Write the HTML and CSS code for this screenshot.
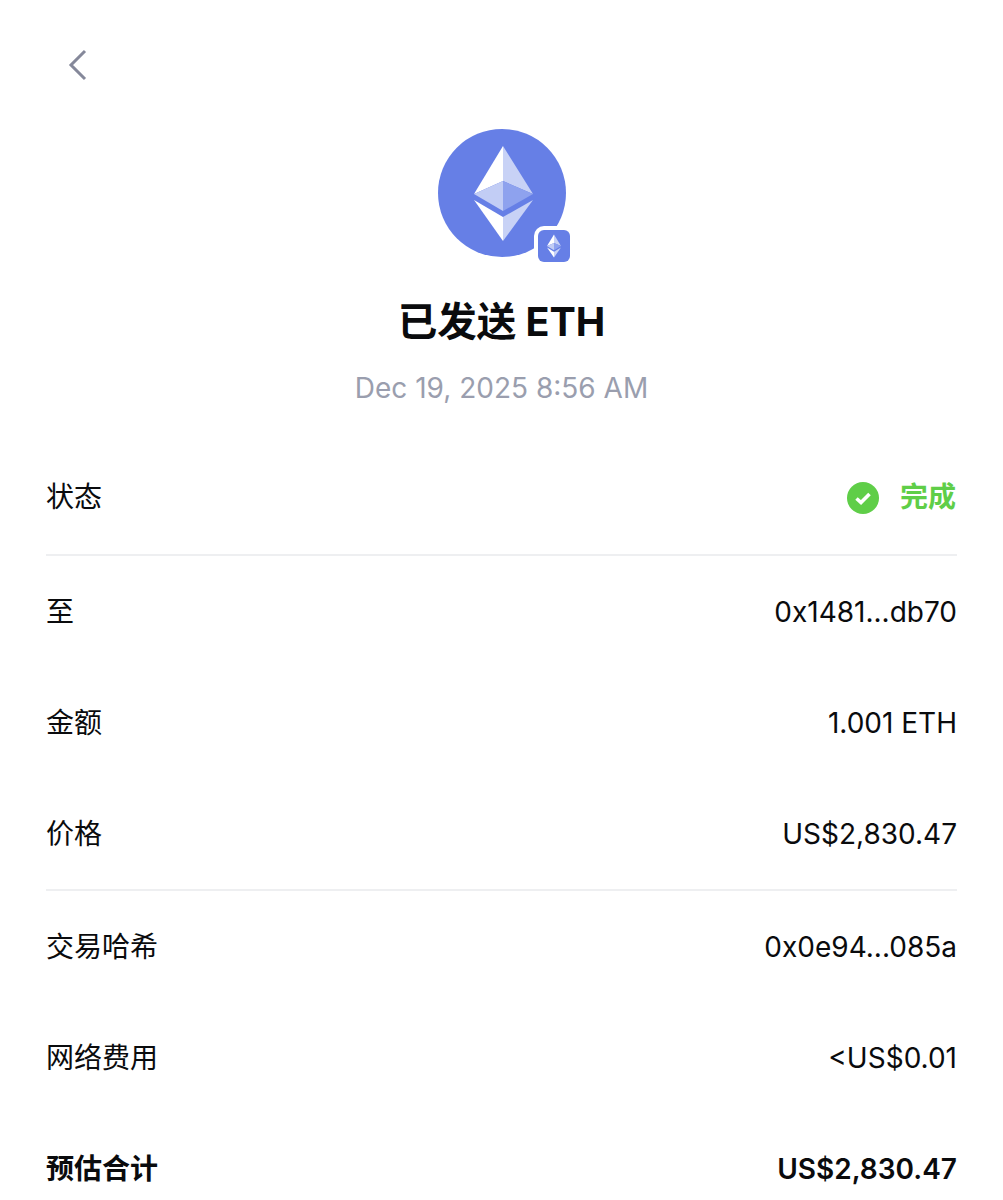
FILE: index.html
```html
<!DOCTYPE html>
<html lang="zh-CN">
  <head>
    <meta charset="UTF-8" />
    <meta name="viewport" content="width=device-width, initial-scale=1.0" />
    <title>已发送 ETH</title>
    <link rel="stylesheet" href="styles.css">
  </head>
  <body>
    <header class="top-bar">
      <button class="back-button" aria-label="返回">
        <svg width="20" height="32" viewBox="0 0 20 32">
          <path d="M17 2 L3 16 L17 30" fill="none" stroke="#85889a" stroke-width="3"/>
        </svg>
      </button>
    </header>

    <div class="token">
      <svg class="token-icon" width="128" height="128" viewBox="0 0 128 128">
        <circle cx="64" cy="64" r="64" fill="#667fe6"/>
        <path d="M65 17 L65 52 L36 65 Z" fill="#fff"/>
        <path d="M65 17 L65 52 L95 65 Z" fill="#c8d2f6"/>
        <path d="M36 65 L65 52 L65 82 Z" fill="#c2cdf5"/>
        <path d="M95 65 L65 52 L65 82 Z" fill="#8ea2ee"/>
        <path d="M36 71 L65 88 L65 112 Z" fill="#fff"/>
        <path d="M95 71 L65 88 L65 112 Z" fill="#c8d2f6"/>
      </svg>
      <span class="token-badge">
        <svg width="14" height="24" viewBox="0 0 58 95">
          <path d="M29 0 L29 35 L0 48 Z" fill="#fff"/>
          <path d="M29 0 L29 35 L58 48 Z" fill="#c8d2f6"/>
          <path d="M0 48 L29 35 L29 65 Z" fill="#c2cdf5"/>
          <path d="M58 48 L29 35 L29 65 Z" fill="#8ea2ee"/>
          <path d="M0 54 L29 71 L29 95 Z" fill="#fff"/>
          <path d="M58 54 L29 71 L29 95 Z" fill="#c8d2f6"/>
        </svg>
      </span>
    </div>

    <h1 class="title">已发送 ETH</h1>
    <p class="date">Dec 19, 2025 8:56 AM</p>

    <section class="group group-status">
      <div class="row">
        <span>状态</span>
        <span class="status">
          <svg width="32" height="32" viewBox="0 0 32 32">
            <circle cx="16" cy="16" r="16" fill="#5fce48"/>
            <path d="M9.5 16.5 L14 20.5 L22.5 12" fill="none" stroke="#fff" stroke-width="3.6"/>
          </svg>
          完成
        </span>
      </div>
    </section>

    <section class="group">
      <div class="row"><span>至</span><span>0x1481...db70</span></div>
      <div class="row"><span>金额</span><span>1.001 ETH</span></div>
      <div class="row"><span>价格</span><span>US$2,830.47</span></div>
    </section>

    <section class="group">
      <div class="row"><span>交易哈希</span><span>0x0e94...085a</span></div>
      <div class="row"><span>网络费用</span><span>&lt;US$0.01</span></div>
      <div class="row total"><span>预估合计</span><span>US$2,830.47</span></div>
    </section>
  </body>
</html>
```

FILE: styles.css
```css
html,
body {
  height: 1200px;
  overflow: hidden;
}
body {
  font-family: Inter, "Noto Sans CJK SC", sans-serif;
  margin: 0;
  padding: 0 46px;
  background-color: #fff;
  color: #0a0b0d;
}
.top-bar {
  height: 129px;
  padding: 49px 0 0 22px;
  box-sizing: border-box;
}
.back-button {
  display: block;
  padding: 0;
  border: none;
  background: none;
  line-height: 0;
}
.token {
  position: relative;
  width: 128px;
  height: 128px;
  margin: 0 auto;
}
.token-icon {
  display: block;
}
.token-badge {
  position: absolute;
  left: 100px;
  top: 101px;
  width: 32px;
  height: 32px;
  display: flex;
  align-items: center;
  justify-content: center;
  background-color: #667fe6;
  border-radius: 6px;
  box-shadow: 0 0 0 4px #fff;
}
.title {
  margin: 37px 0 0;
  font-size: 39.5px;
  line-height: 56px;
  font-weight: 700;
  text-align: center;
}
.date {
  margin: 20px 0 0;
  font-size: 28px;
  line-height: 36px;
  color: #9a9eae;
  text-align: center;
}
.group {
  border-bottom: 2px solid #eeeff1;
}
.group:last-child {
  border-bottom: none;
}
.group-status {
  margin-top: 35px;
  padding-bottom: 2px;
}
.row {
  display: flex;
  justify-content: space-between;
  align-items: center;
  height: 111px;
  font-size: 28px;
  line-height: 40px;
}
.status {
  display: flex;
  align-items: center;
  gap: 21px;
  margin-right: 1px;
  font-weight: 700;
  color: #5fce48;
}
.status svg {
  margin-top: 2px;
}
.total {
  height: 87px;
  box-sizing: border-box;
  padding-top: 36px;
  align-items: flex-start;
  font-weight: 600;
}
.total span:first-child {
  font-weight: 700;
}
```
